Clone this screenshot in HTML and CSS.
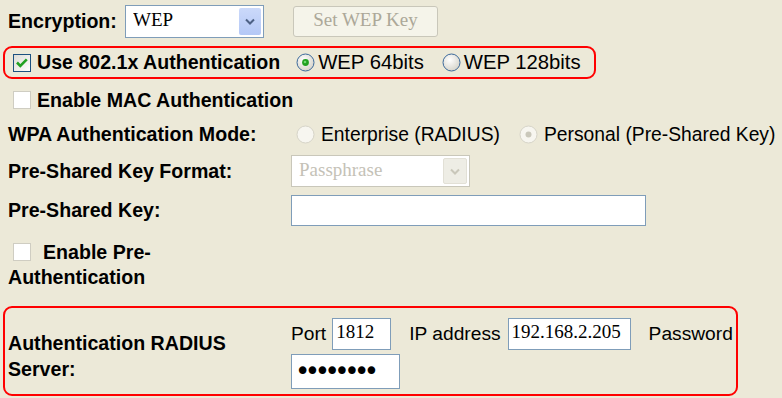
FILE: index.html
```html
<!DOCTYPE html>
<html lang="en">
<head>
    <meta charset="UTF-8">
    <title>Wireless Security</title>
    <link rel="stylesheet" href="styles.css">
</head>
<body>
    <div class="row enc">
        <label class="lbl enc-label">Encryption:</label>
        <div class="select">
            <select><option>WEP</option></select>
            <span class="arrow">
                <svg width="10" height="7" viewBox="0 0 10 7"><path d="M1 1.5 L5 5.5 L9 1.5" fill="none" stroke="#4D6185" stroke-width="2"/></svg>
            </span>
        </div>
        <button class="btn" disabled>Set WEP Key</button>
    </div>

    <div class="hl row">
        <svg class="cb" width="18" height="18" viewBox="0 0 18 18">
            <defs><linearGradient id="cbg" x1="0" y1="0" x2="1" y2="1"><stop offset="0" stop-color="#DCDCD5"/><stop offset="1" stop-color="#fff"/></linearGradient></defs>
            <rect x="0.5" y="0.5" width="17" height="17" fill="url(#cbg)" stroke="#1C5180"/>
            <path d="M4 8.5 L7.3 11.8 L13.8 5.3" fill="none" stroke="#21A121" stroke-width="2.6"/>
        </svg>
        <span class="lbl cb-text">Use 802.1x Authentication</span>
        <span class="opt first">
            <svg class="rb" width="19" height="19" viewBox="0 0 19 19">
                <defs><radialGradient id="rbg" cx="0.4" cy="0.35" r="0.7"><stop offset="0" stop-color="#fff"/><stop offset="1" stop-color="#D4D2C8"/></radialGradient></defs>
                <circle cx="9.5" cy="9.5" r="8.5" fill="url(#rbg)" stroke="#3C6A9C"/>
                <circle cx="9.5" cy="9.5" r="3.4" fill="#21A121"/>
                <circle cx="9" cy="9" r="1.3" fill="#6FD86F"/>
            </svg>
            <span>WEP 64bits</span>
        </span>
        <span class="opt">
            <svg class="rb" width="19" height="19" viewBox="0 0 19 19">
                <circle cx="9.5" cy="9.5" r="8.5" fill="url(#rbg)" stroke="#3C6A9C"/>
            </svg>
            <span>WEP 128bits</span>
        </span>
    </div>

    <div class="row mac">
        <svg class="cb" width="18" height="18" viewBox="0 0 18 18">
            <rect x="0.5" y="0.5" width="17" height="17" fill="#fff" stroke="#CFCDC2"/>
        </svg>
        <span class="lbl cb-text">Enable MAC Authentication</span>
    </div>

    <div class="frow wpa">
        <span class="lbl">WPA Authentication Mode:</span>
        <div class="row radios">
            <svg class="rb" width="19" height="19" viewBox="0 0 19 19">
                <circle cx="9.5" cy="9.5" r="8.5" fill="#F7F6F0" stroke="#D6D4C8"/>
            </svg>
            <span class="rtext">Enterprise (RADIUS)</span>
            <svg class="rb second" width="19" height="19" viewBox="0 0 19 19">
                <circle cx="9.5" cy="9.5" r="8.5" fill="#F7F6F0" stroke="#D6D4C8"/>
                <circle cx="9.5" cy="9.5" r="3" fill="#CAC8BB"/>
            </svg>
            <span class="rtext">Personal (Pre-Shared Key)</span>
        </div>
    </div>

    <div class="frow pskf">
        <span class="lbl">Pre-Shared Key Format:</span>
        <div class="select disabled">
            <select disabled><option>Passphrase</option></select>
            <span class="arrow">
                <svg width="10" height="7" viewBox="0 0 10 7"><path d="M1 1.5 L5 5.5 L9 1.5" fill="none" stroke="#C9C7BA" stroke-width="2"/></svg>
            </span>
        </div>
    </div>

    <div class="frow psk">
        <span class="lbl">Pre-Shared Key:</span>
        <div><input type="text" class="field key-field"></div>
    </div>

    <div class="frow preauth">
        <div class="lbl preauth-label">
            <svg class="cb" width="18" height="18" viewBox="0 0 18 18">
                <rect x="0.5" y="0.5" width="17" height="17" fill="#fff" stroke="#CFCDC2"/>
            </svg>Enable Pre-Authentication
        </div>
        <div></div>
    </div>

    <div class="hl radius">
        <div class="lbl radius-label">Authentication RADIUS Server:</div>
        <div class="radius-fields">
            <div class="row line">
                <span>Port</span>
                <input type="text" class="field port" value="1812">
                <span class="gap-text">IP address</span>
                <input type="text" class="field ip" value="192.168.2.205">
                <span class="gap-text">Password</span>
            </div>
            <input type="password" class="field pass" value="radiusky">
        </div>
    </div>
</body>
</html>
```

FILE: styles.css
```css
body {
    margin: 0;
    padding: 5px 0 0 8px;
    background-color: #ECE9D8;
    font-family: "Liberation Sans", Arial, sans-serif;
    font-size: 19.6px;
    color: #000;
}
.row {
    display: flex;
    align-items: center;
}
.lbl {
    font-weight: bold;
}
svg {
    display: block;
    flex: none;
}

/* encryption row */
.enc {
    height: 33px;
}
.enc-label {
    width: 117px;
}
.select {
    display: flex;
    width: 139px;
    height: 33px;
    box-sizing: border-box;
    border: 1px solid #7F9DB9;
    background-color: #fff;
    padding: 2px 2px 2px 0;
}
.select select {
    flex: 1;
    min-width: 0;
    appearance: none;
    -webkit-appearance: none;
    border: none;
    background: transparent;
    font-family: "Liberation Serif", "Times New Roman", serif;
    font-size: 19px;
    color: #000;
    padding: 0 0 4px 7px;
    outline: none;
}
.arrow {
    width: 22px;
    flex: none;
    display: flex;
    align-items: center;
    justify-content: center;
    border-radius: 2px;
    background: linear-gradient(#CBD9FA, #B4C8F6);
}
.select.disabled {
    width: 179px;
    height: 32px;
    border-color: #C9C7BA;
}
.select.disabled select {
    color: #ACA899;
}
.select.disabled .arrow {
    background: #EEEDE5;
    border: 1px solid #E2E0D6;
}
.btn {
    margin-left: 29px;
    width: 145px;
    height: 31px;
    border: 1px solid #C9C7BA;
    border-radius: 3px;
    background-color: #F5F4EA;
    color: #ACA899;
    font-family: "Liberation Serif", "Times New Roman", serif;
    font-size: 19px;
    padding: 0 0 3px;
}

/* highlighted boxes */
.hl {
    margin: 8px 0 0 -5px;
    box-sizing: border-box;
    border: 2px solid #FF0000;
    border-radius: 9px;
}
.hl.row {
    width: 593px;
    height: 33px;
    padding-left: 8px;
}
.cb-text {
    margin-left: 6px;
}
.opt {
    display: flex;
    align-items: center;
    margin-left: 18px;
}
.opt.first {
    margin-left: 16px;
}
.opt span {
    margin-left: 3px;
    font-size: 20.3px;
}

.mac {
    margin-top: 4px;
    height: 34px;
    padding-left: 5px;
}

/* label / value rows */
.frow {
    display: grid;
    grid-template-columns: 270px auto;
    column-gap: 13px;
    align-items: center;
}
.wpa {
    height: 35px;
}
.pskf {
    height: 38px;
}
.psk {
    height: 40px;
}
.radios {
    padding-left: 5px;
}
.rtext {
    margin-left: 6px;
    font-size: 19.3px;
}
.rb.second {
    margin-left: 19px;
}
.field {
    box-sizing: border-box;
    border: 1px solid #7F9DB9;
    background-color: #fff;
    font-family: "Liberation Serif", "Times New Roman", serif;
    font-size: 19px;
    padding: 0 0 4px 3px;
    outline: none;
}
.key-field {
    display: block;
    width: 355px;
    height: 31px;
}

.preauth {
    margin-top: 10px;
    align-items: start;
}
.preauth-label {
    line-height: 25px;
}
.preauth-label .cb {
    display: inline-block;
    vertical-align: top;
    margin: 3px 12px 0 5px;
}

/* radius server */
.hl.radius {
    margin-top: 16px;
    width: 735px;
    height: 90px;
    padding-left: 3px;
    display: grid;
    grid-template-columns: 270px auto;
    column-gap: 13px;
    align-items: start;
}
.radius-label {
    padding-top: 22px;
    line-height: 26px;
}
.radius-fields {
    padding-top: 10px;
}
.line {
    height: 32px;
    font-size: 19.2px;
    white-space: nowrap;
}
.line > * {
    flex: none;
}
.port {
    margin-left: 6px;
    width: 59px;
    height: 32px;
}
.gap-text {
    margin-left: 18px;
}
.ip {
    margin-left: 7px;
    width: 123px;
    height: 32px;
}
.pass {
    display: block;
    margin-top: 4px;
    width: 109px;
    height: 35px;
    font-family: "DejaVu Sans", sans-serif;
    font-size: 26px;
    letter-spacing: -5.5px;
    padding: 0 0 2px 3px;
}
```
